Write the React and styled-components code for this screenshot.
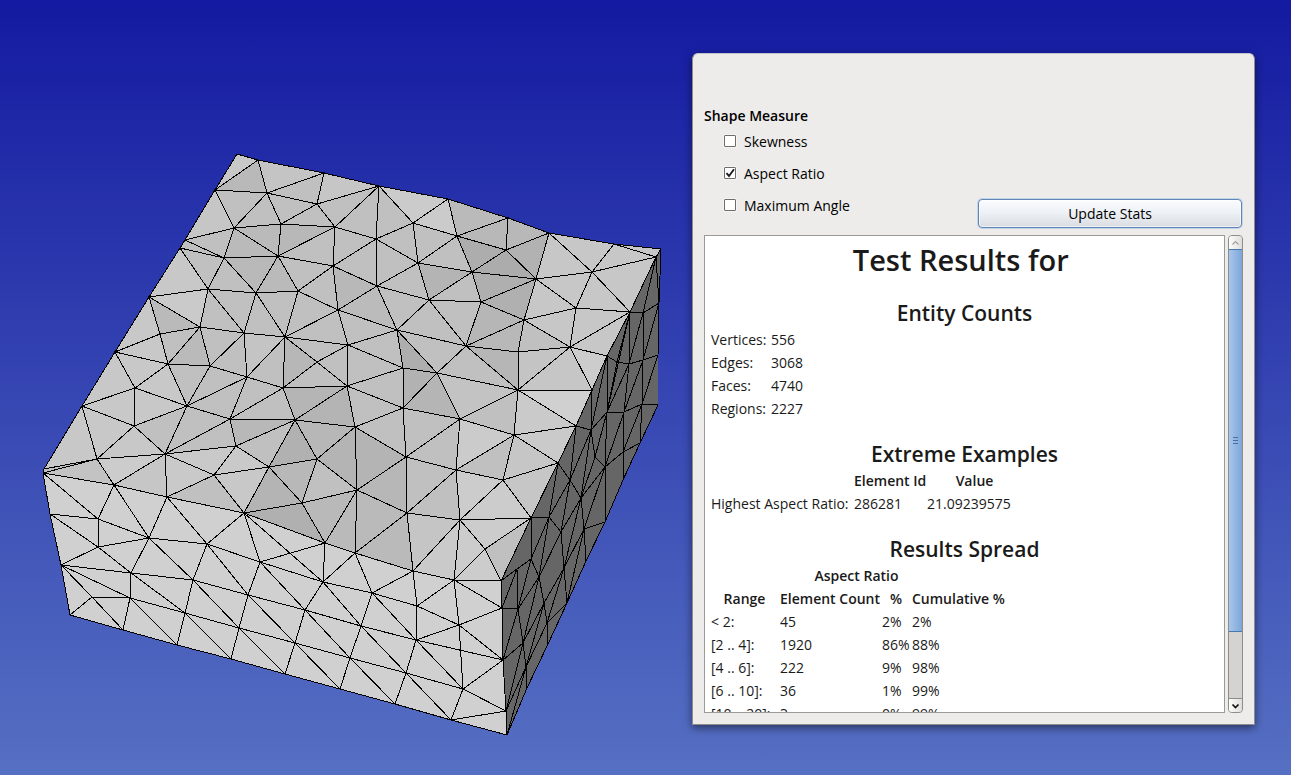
import React, { useState } from "react";
import styled, { createGlobalStyle } from "styled-components";

const GlobalStyle = createGlobalStyle`
  * {
    box-sizing: border-box;
  }
  body {
    margin: 0;
    font-family: "Open Sans", "Noto Sans", sans-serif;
    font-size: 14px;
    color: #000;
  }
`;

// mesh vertices: a = far edge, b = left edge, c-h = top, f/i/j = front, s = side
const V = {
  a1: [237, 154], a2: [258, 160], a3: [324, 173], a4: [379, 186], a5: [448, 199],
  a6: [508, 218], a7: [549, 233], a8: [614, 244], a9: [661, 249], a10: [656, 257],
  b1: [215, 190], b2: [185, 240], b3: [180, 248], b4: [149, 297], b5: [115, 352],
  b6: [82, 406], b7: [44, 469], b8: [43, 473],
  c1: [267, 193], c2: [317, 204], c3: [234, 228], c4: [281, 224], c5: [335, 227],
  c6: [376, 239], c7: [413, 223], c8: [224, 258], c9: [278, 256], c10: [333, 266],
  c11: [418, 263], c12: [377, 286], c13: [208, 289], c14: [256, 293], c15: [298, 291],
  c16: [338, 310], c17: [429, 300], c18: [200, 327], c19: [244, 333], c20: [285, 337],
  c21: [397, 330], c22: [348, 345],
  d1: [457, 236], d2: [506, 250], d3: [472, 272], d4: [536, 279], d5: [592, 272],
  d6: [481, 302], d7: [524, 320], d8: [576, 308], d9: [630, 312], d10: [466, 346],
  d11: [518, 352], d12: [570, 347], d13: [607, 356], d14: [437, 373], d15: [518, 390],
  d16: [592, 390], e1: [403, 368],
  f1: [160, 334], f4: [168, 364], f5: [210, 366], f6: [247, 377], f7: [135, 388],
  f8: [187, 406], f9: [230, 419], f10: [134, 426], f11: [236, 446], f12: [97, 459],
  f13: [165, 454], f14: [214, 475], f15: [269, 467], f16: [114, 485], f17: [167, 497],
  f18: [244, 513], f19: [50, 514], f20: [98, 519], f21: [98, 547], f22: [149, 538],
  f23: [207, 544], f24: [61, 565], f25: [131, 573], f26: [193, 580], f27: [260, 562],
  f28: [248, 595], f29: [92, 597], f30: [130, 598], f31: [185, 613], f34: [239, 628],
  g5: [317, 362], g8: [283, 388], g9: [347, 386], g10: [403, 408], g11: [460, 419],
  g12: [295, 420], g13: [355, 427], g14: [317, 459], g15: [406, 457], g16: [456, 470],
  g18: [357, 490], g19: [302, 503], g20: [407, 513], g21: [460, 520], g22: [325, 543],
  h1: [514, 435], h2: [503, 480], h3: [576, 426], h4: [558, 463], h5: [531, 518],
  i5: [355, 553], i6: [413, 571], i7: [454, 580], i8: [501, 581], i9: [485, 549],
  i10: [323, 582], i11: [372, 593], i12: [417, 606], i13: [459, 625], i14: [502, 608],
  i16: [305, 610], i17: [361, 626], i18: [416, 640], i19: [503, 660], i21: [295, 643],
  i22: [350, 658], i23: [406, 673], i24: [463, 689], i25: [506, 711],
  j0: [70, 615], j1: [123, 630], j2: [177, 645], j3: [231, 659], j4: [285, 674],
  j5: [340, 689], j6: [395, 704], j7: [451, 720], j8: [507, 735],
  s1: [659, 303], s2: [643, 313], s4: [658, 355], s5: [643, 360], s6: [629, 364],
  sb: [617, 362], s7: [658, 405], s8: [642, 404], s9: [624, 412], s10: [607, 412],
  s11: [591, 430], s12: [640, 443], s13: [623, 452], s14: [605, 467], s15: [595, 457],
  s16: [570, 480], s17: [581, 498], s18: [549, 517], s19: [561, 532], s20: [584, 529],
  s21: [605, 522], s22: [564, 568], s23: [531, 559], s24: [539, 577], s25: [517, 569],
  s26: [544, 603], s27: [547, 623], s28: [518, 609], s29: [523, 643], s30: [526, 667],
  t1: [623, 480], t2: [586, 561], t3: [567, 603], t4: [548, 644], t5: [527, 688],
};

const OUTLINE =
  "a1 a2 a3 a4 a5 a6 a7 a8 a9 s1 s4 s7 s12 t1 s21 t2 t3 t4 t5 j8 j7 j6 j5 j4 j3 j2 j1 j0 f24 f19 b8 b7 b6 b5 b4 b3 b2 b1";

const EDGES = [
  // top, back rows
  "b1 a2 c1 b1 c3 c1 c2 a4 c5 c2 c4 c1 a3 c2", "c3 c4 c5 c6 c7 a5 d1 c7 a4 c6 c11 c7",
  "b2 c3 c8 b2", "b3 c8 c9 c3", "c4 c9 c5 c10 c9 c15 c10 c6 c12 c10 c16 c12 c11 c17 c12 c21",
  "b3 c13 c8 c14 c9", "c11 d1 d3 c11", "b4 c13 c14 c15 c20 c14 c19 c13 c18 b4 f1 c18 c19 c20 c22 c21 c16 c20",
  "c15 c16 c22", "d1 a6 d2 d1", "a7 d2 d3 d4 a7 d5 d4 d2", "d5 a8 a10 d5 d9 d8 d5",
  "c17 d3 d6 c17 d10 d6 d4 d7 d6", "d4 d8 d7 d10 d11 d12 d7 d11 d15 d12 d8", "d9 d12 d13",
  "d12 d16 d15 d10 d14 d15 h3 h1 d15 g11 d14 c21 d10", "c17 c21 e1 d14 g10 e1 c22 g5 g9 c22",
  // top, front rows
  "b5 f1 f4 b5 f7 f4 c18 f5 f4 f8 f5 c19 f6 f5", "f6 c20 g8 f6 f8 f9 f6", "c20 g5 g8 g9 e1",
  "f7 f8 f10 f7 b6 f10 f12 b6", "f8 f13 f9 g8 g12 f9 f11 g12 g9 g13 g12 g14 g13 g10 g9",
  "b7 f12 f13 f10", "b8 f12 f16 f13 f11 f15 g12", "f13 f17 f14 f13", "f11 f14 f15 f18 f14",
  "f15 g14 g19 f15", "g14 g18 g13 g15 g10 g11 g15 g18 g19 g22 g18 g20 g15 g16 g11 h1 g16 g20 g21 g16 h2 h1 h4 h2 h5 g21 h2",
  "f18 g19", "g18 i5 g20 i6 g21 i7 i9 g21", "h5 i9 i8",
  "b8 f16 f17 f18 g22 i5 i6 i7 i8",
  // front
  "b8 f20 f16 f22 f20 f19 f21 f20", "f21 f22 f17 f23 f22 f25 f21 f24 f25 f26 f22", "f18 f23 f27 f18 i10 f27 g22 i10 i5 i11",
  "f23 f26 f28 f23", "f24 f30 f25 f31 f30 f29 f24", "j0 f29 j1 f30 j2 f31 j3 f34 f31 f26 f34 f28 f27 i16 f28 i21 f34 j4 i21 j5 i22 i21 i16 i10 i11 i6 i12 i11 i17 i10",
  "i16 i17 i22 i16", "i22 j6 i23 i22", "i17 i23 i18 i17", "i11 i18 i12 i7 i13 i12", "i7 i14 i13 i19 i18 i13 i24 i18",
  "i23 i24 i19", "i23 j7 i24 i25 j7",
  "a9 a10 d9 d13 d16 h3 h4 h5 i8 i14 i19 i25 j8",
  // side
  "d9 s2 s1", "d13 sb s6 s5 s4", "h3 s11 s10 s9 s8 s7", "s11 s15 s14 s13 s12", "h4 s16 s17 s14",
  "h5 s18 s19 s22 t3", "i8 s25 s23 s24 s26 s27 t4", "i14 s28 s29 s30 t5", "i19 s29", "s27 t3", "s20 s21",
  "a10 s1", "a10 s2 s5 s8 s12", "d9 s6 s9 s13 t1", "d13 s10 s14 s21", "d16 s11 s17 s20 t2",
  "h3 s16 s19", "h4 s18", "h5 s23", "s25 s28", "a10 s2 s6 s10", "s1 s5 s9 s14", "s4 s8 s13",
  "s7 s12", "d9 sb s10 s15 s17 s19 s24 s28", "d9 s10", "d13 s11 s16 s18 s23 s28 i19",
  "s14 s20 s22 s26 s29 i25 s30 s27 s22", "s17 s22", "s20 t3", "s26 s30 j8",
  "s18 s24 s29", "s25 i14",
];

// facets whose shade differs from the surface they belong to
const FACETS = [
  ["#c8c8c8", "a1 a2 b1"], ["#c4c4c4", "a2 a3 c1"], ["#b9b9b9", "a2 c1 b1"], ["#c6c6c6", "b1 c3 b2"],
  ["#c6c6c6", "a3 a4 c2"], ["#cbcbcb", "a4 a5 d1 c7"], ["#bababa", "c3 c4 c9 c8"], ["#b8b8b8", "c4 c5 c9"],
  ["#c8c8c8", "b3 c13 b4"], ["#cacaca", "b4 c13 c18"], ["#bababa", "b4 c18 f1"], ["#b9b9b9", "c8 c9 c14"],
  ["#bababa", "c9 c15 c14"], ["#b8b8b8", "c10 c12 c16"], ["#bbbbbb", "c16 c12 c21"],
  ["#bababa", "a5 a6 d1"], ["#b8b8b8", "a6 a7 d2 d1"], ["#adadad", "d1 d2 d3"], ["#b2b2b2", "a7 d4 d2"],
  ["#acacac", "d2 d4 d3"], ["#afafaf", "d3 d4 d6"], ["#b0b0b0", "d4 d7 d6"], ["#b4b4b4", "c11 d3 c17"],
  ["#b6b6b6", "d6 d7 d10"], ["#b8b8b8", "d7 d11 d10"], ["#b6b6b6", "d10 d11 d15"],
  ["#c7c7c7", "a7 a8 a9 a10 d9 d13 d12 d7 d4"], ["#cccccc", "d12 d13 d16"], ["#c4c4c4", "d11 d12 d15"],
  ["#c6c6c6", "d12 d16 d15"], ["#d0d0d0", "d15 d16 h3"], ["#cacaca", "d15 h3 h4 h1"], ["#c6c6c6", "h1 h4 h5 h2"],
  ["#c3c3c3", "d14 d15 g11"], ["#cbcbcb", "g11 h1 g16"], ["#cccccc", "g16 h2 h5 i9 i8 i7 g21"],
  ["#c5c5c5", "g20 g21 i6"], ["#cacaca", "g21 i7 i6"], ["#aeaeae", "c21 d14 e1"], ["#b2b2b2", "e1 d14 g10"],
  ["#b5b5b5", "d14 g11 g10"], ["#b7b7b7", "c20 g5 g8"], ["#b5b5b5", "g8 g9 g12"], ["#b4b4b4", "g9 g13 g12"],
  ["#b7b7b7", "g12 g13 g14"], ["#b1b1b1", "g12 g14 f15"], ["#b4b4b4", "g13 g15 g18 g14"],
  ["#b8b8b8", "f15 g14 g19"], ["#b4b4b4", "f15 g19 f18"], ["#b0b0b0", "f18 g19 g22"], ["#b7b7b7", "g15 g20 g18"],
  ["#b9b9b9", "g19 g18 g22"], ["#bababa", "g18 g20 i6 i5 g22"], ["#c8c8c8", "b4 f1 f4 b5"],
  ["#c8c8c8", "b5 f4 f8 f10 f13 f12 b7 b6"], ["#bababa", "c18 f5 f4"], ["#c4c4c4", "c19 c20 f6"],
  ["#c9c9c9", "f11 f15 f14 f13"], ["#c9c9c9", "f13 f14 f17"], ["#c3c3c3", "b8 f12 f16"], ["#c8c8c8", "f14 f15 f18"],
  ["#cccccc", "f12 f13 f16"], ["#c6c6c6", "f13 f17 f16"], ["#b8b8b8", "f9 g12 f11"],
];

const pts = (names) => names.split(" ").map((n) => V[n].join(",")).join(" ");

const Page = styled.main`
  display: flex;
  align-items: stretch;
  min-height: 100vh;
  background: linear-gradient(#141aa1, #5670c3);
`;

const MeshView = styled.svg`
  flex: 1 1 0;
  min-width: 0;
  height: auto;
  align-self: flex-start;
`;

const Panel = styled.section`
  flex: none;
  display: flex;
  flex-direction: column;
  width: 563px;
  height: calc(100vh - 103px);
  margin: 53px 36px 50px 0;
  padding: 53px 11px 11px;
  background: #edecea;
  border: 1px solid #8e8d8b;
  border-top-color: #c4c3cc;
  border-radius: 6px 6px 1px 1px;
  box-shadow: 0 3px 8px rgba(0, 0, 0, 0.5);
`;

const Controls = styled.div`
  display: flex;
  justify-content: space-between;
  align-items: flex-end;
  padding-bottom: 7px;
`;

const Measures = styled.fieldset`
  margin: 0;
  padding: 0 0 7px;
  border: 0;
`;

const Legend = styled.legend`
  padding: 0;
  line-height: 18px;
  font-weight: 600;
`;

const Option = styled.label`
  display: flex;
  align-items: center;
  gap: 8px;
  height: 32px;
  padding-left: 20px;
`;

const TickBox = styled.span`
  display: grid;
  width: 12px;
  height: 12px;

  > * {
    grid-area: 1 / 1;
  }
  input {
    appearance: none;
    width: 12px;
    height: 12px;
    margin: 0;
    background: #fff;
    border: 1px solid #6f6d69;
    border-radius: 1px;
    box-shadow: 0 0 0 1px #f6f5f4;
  }
  svg {
    z-index: 1;
    pointer-events: none;
  }
`;

const UpdateButton = styled.button`
  width: 264px;
  height: 29px;
  margin-right: 1px;
  padding: 0;
  font: inherit;
  color: #000;
  background: linear-gradient(#fafcfe, #eef1f6 45%, #d9dce1);
  border: 1px solid #5f86b6;
  border-radius: 4px;
  box-shadow: 0 0 0 1px #c3d3e8, inset 0 0 0 1px rgba(255, 255, 255, 0.6);
`;

const ReportRow = styled.div`
  flex: 1;
  display: flex;
  gap: 3px;
  min-height: 0;
`;

const Report = styled.article`
  flex: 1;
  min-width: 0;
  overflow: hidden;
  padding: 4px 4px 0;
  color: #1a1a1a;
  background: #fff;
  border: 1px solid #9c9a97;
`;

const Title = styled.h1`
  margin: 0;
  font-size: 29px;
  line-height: 40px;
  font-weight: 600;
  text-align: center;
`;

const Heading = styled.h2`
  margin: 18px 0 0;
  font-size: 21px;
  line-height: 30px;
  font-weight: 600;
  text-align: center;

  table + & {
    margin-top: 19px;
  }
`;

const Table = styled.table`
  table-layout: fixed;
  width: ${(p) => p.$width}px;
  border-collapse: collapse;
  white-space: nowrap;

  th,
  td {
    height: 23px;
    padding: 0 0 0 2px;
    line-height: 23px;
    text-align: left;
    font-weight: 400;
  }
  thead th {
    text-align: center;
    font-weight: 600;
  }
`;

const ScrollBar = styled.div`
  display: flex;
  flex-direction: column;
  width: 15px;
  background: #d4d3d1;
  border: 1px solid #8f8d89;
  border-radius: 4px;
  overflow: hidden;
`;

const StepButton = styled.button`
  display: grid;
  place-items: center;
  height: 13px;
  padding: 0;
  border: 0;
  background: linear-gradient(90deg, #fcfcfc, #dedddb);

  &:last-child {
    box-shadow: 0 -1px 0 #8f8d89;
  }
`;

const Track = styled.div`
  flex: 1;
  display: flex;
  flex-direction: column;
`;

const Thumb = styled.div`
  flex: 0 0 85%;
  display: grid;
  place-items: center;
  margin: 0 -1px;
  background: linear-gradient(90deg, #a8c6ec, #7da6d8);
  border: 1px solid #4878b0;
`;

const COUNTS = [["Vertices:", "556"], ["Edges:", "3068"], ["Faces:", "4740"], ["Regions:", "2227"]];

const SPREAD = [
  ["< 2:", "45", "2%", "2%"],
  ["[2 .. 4]:", "1920", "86%", "88%"],
  ["[4 .. 6]:", "222", "9%", "98%"],
  ["[6 .. 10]:", "36", "1%", "99%"],
  ["[10 .. 20]:", "3", "0%", "99%"],
];

function Mesh() {
  return (
    <MeshView viewBox="0 0 692 775" role="img" aria-label="Mesh" shapeRendering="crispEdges">
      <polygon points={pts(OUTLINE)} fill="#c0c0c0" />
      {FACETS.map(([fill, names]) => (
        <polygon key={names} points={pts(names)} fill={fill} />
      ))}
      <polygon
        points={pts("b8 f16 f17 f18 g22 i5 i6 i7 i8 i14 i19 i25 j8 j7 j6 j5 j4 j3 j2 j1 j0 f24 f19")}
        fill="#d0d0d0"
      />
      <polygon
        points={pts("a9 s1 s4 s7 s12 t1 s21 t2 t3 t4 t5 j8 i25 i19 i14 i8 h5 h4 h3 d16 d13 d9 a10")}
        fill="#666"
      />
      <g fill="none" stroke="#000">
        <polygon points={pts(OUTLINE)} />
        {EDGES.map((names) => (
          <polyline key={names} points={pts(names)} />
        ))}
      </g>
    </MeshView>
  );
}

function MeasureOption({ label, initial }) {
  const [checked, setChecked] = useState(initial);
  return (
    <Option>
      <TickBox>
        <input type="checkbox" checked={checked} onChange={() => setChecked(!checked)} />
        {checked && (
          <svg width="12" height="12" viewBox="0 0 12 12">
            <path d="M2.5 6.2 5 9 10 2.2" fill="none" stroke="#1c1c24" strokeWidth="1.9" />
          </svg>
        )}
      </TickBox>
      {label}
    </Option>
  );
}

function Cols({ widths }) {
  return (
    <colgroup>
      {widths.map((w, i) => (
        <col key={i} width={w} />
      ))}
    </colgroup>
  );
}

function Row({ cells }) {
  return (
    <tr>
      <th scope="row">{cells[0]}</th>
      {cells.slice(1).map((c, i) => (
        <td key={i}>{c}</td>
      ))}
    </tr>
  );
}

function App() {
  return (
    <>
      <GlobalStyle />
      <Page>
        <Mesh />
        <Panel>
          <Controls>
            <Measures>
              <Legend>Shape Measure</Legend>
              <MeasureOption label="Skewness" initial={false} />
              <MeasureOption label="Aspect Ratio" initial />
              <MeasureOption label="Maximum Angle" initial={false} />
            </Measures>
            <UpdateButton type="button">Update Stats</UpdateButton>
          </Controls>
          <ReportRow>
            <Report>
              <Title>Test Results for&nbsp;</Title>
              <Heading>Entity Counts</Heading>
              <Table $width={120}>
                <Cols widths={[60, 60]} />
                <tbody>
                  {COUNTS.map((cells) => (
                    <Row key={cells[0]} cells={cells} />
                  ))}
                </tbody>
              </Table>
              <Heading>Extreme Examples</Heading>
              <Table $width={313}>
                <Cols widths={[143, 73, 97]} />
                <thead>
                  <tr>
                    <td />
                    <th scope="col">Element Id</th>
                    <th scope="col">Value</th>
                  </tr>
                </thead>
                <tbody>
                  <Row cells={["Highest Aspect Ratio:", "286281", "21.09239575"]} />
                </tbody>
              </Table>
              <Heading>Results Spread</Heading>
              <Table $width={293}>
                <Cols widths={[69, 102, 30, 92]} />
                <thead>
                  <tr>
                    <th colSpan={4}>Aspect Ratio</th>
                  </tr>
                  <tr>
                    <th scope="col">Range</th>
                    <th scope="col">Element Count</th>
                    <th scope="col">%</th>
                    <th scope="col">Cumulative %</th>
                  </tr>
                </thead>
                <tbody>
                  {SPREAD.map((cells) => (
                    <Row key={cells[0]} cells={cells} />
                  ))}
                </tbody>
              </Table>
            </Report>
            <ScrollBar>
              <StepButton type="button" aria-label="Scroll up">
                <svg width="9" height="6" viewBox="0 0 9 6">
                  <path d="M1.5 4.5 4.5 1.5 7.5 4.5" fill="none" stroke="#a3a19e" strokeWidth="1.2" />
                </svg>
              </StepButton>
              <Track>
                <Thumb>
                  <svg width="7" height="7" viewBox="0 0 7 7" shapeRendering="crispEdges">
                    <path d="M1 .5h5M1 3.5h5M1 6.5h5" stroke="#456fa5" />
                  </svg>
                </Thumb>
              </Track>
              <StepButton type="button" aria-label="Scroll down">
                <svg width="9" height="6" viewBox="0 0 9 6">
                  <path d="M1.5 1.5 4.5 4.5 7.5 1.5" fill="none" stroke="#111" strokeWidth="1.7" />
                </svg>
              </StepButton>
            </ScrollBar>
          </ReportRow>
        </Panel>
      </Page>
    </>
  );
}

export default App;
